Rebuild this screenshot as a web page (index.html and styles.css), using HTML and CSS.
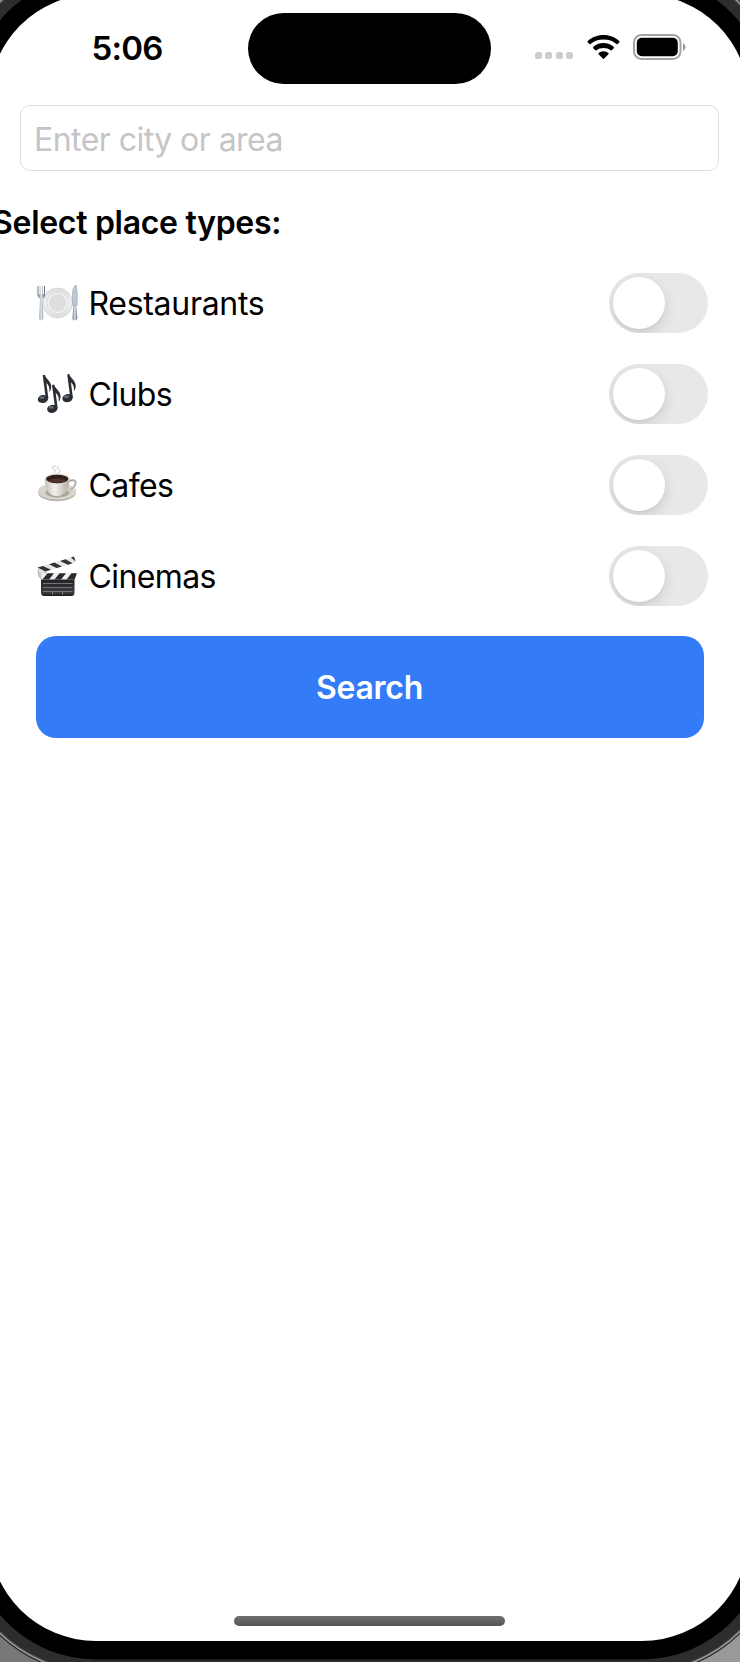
FILE: index.html
```html
<!DOCTYPE html>
<html lang="en">
<head>
<meta charset="utf-8">
<title>Place search</title>
<link rel="stylesheet" href="styles.css">
</head>
<body>
<main class="screen">
  <header class="status">
    <span class="time">5:06</span>
    <div class="island"></div>
    <div class="indicators">
      <span class="dots"><i></i><i></i><i></i><i></i></span>
      <svg class="wifi" width="33" height="25" viewBox="0 0 33 25">
        <path d="M16.5 0C23 0 28.5 2.400 32.400 6.200Q32.900 6.800 32.400 7.300L30.600 9.100Q30 9.600 29.400 9.100C26 5.900 21.500 4.600 16.500 4.600S7 5.900 3.600 9.100Q3 9.600 2.400 9.100L.6 7.300Q.1 6.800.6 6.200C4.500 2.400 10 0 16.500 0Z"/>
        <path d="M16.500 8.100C20.600 8.100 24.100 9.500 26.800 12.100Q27.300 12.700 26.800 13.200L24.700 15.200Q24.100 15.700 23.500 15.200C21.600 13.600 19.200 12.900 16.500 12.900S11.400 13.600 9.500 15.200Q8.900 15.700 8.300 15.200L6.200 13.200Q5.700 12.700 6.200 12.100C8.900 9.500 12.400 8.100 16.500 8.100Z"/>
        <path d="M16.500 16.200C18.500 16.200 20.200 17 21.400 18.100Q21.900 18.700 21.400 19.200L17.200 23.600Q16.500 24.300 15.800 23.600L11.600 19.200Q11.100 18.700 11.600 18.100C12.800 17 14.500 16.200 16.500 16.200Z"/>
      </svg>
      <svg class="battery" width="54" height="26" viewBox="0 0 54 26">
        <rect x="1" y="1" width="46.500" height="24" rx="7.500" fill="none" stroke="#a3a3a3" stroke-width="2"/>
        <rect x="3.800" y="3.800" width="41" height="18.400" rx="5"/>
        <path d="M50 9.300C53.300 10.600 53.300 15.600 50 16.900Z" fill="#999"/>
      </svg>
    </div>
  </header>

  <input class="city" type="text" placeholder="Enter city or area">
  <h1 class="heading">Select place types:</h1>

  <ul class="types">
    <li class="type">
      <svg class="emoji" width="44" height="44" viewBox="0 0 44 44">
        <defs>
          <linearGradient id="steel" x2="1" y2="0"><stop stop-color="#71757d"/><stop offset=".5" stop-color="#dce5ef"/><stop offset="1" stop-color="#62666e"/></linearGradient>
          <linearGradient id="plate" x2="0" y2="1"><stop stop-color="#dededc"/><stop offset=".5" stop-color="#efefee"/><stop offset="1" stop-color="#dcdcda"/></linearGradient>
        </defs>
        <circle cx="20.500" cy="21" r="15" fill="url(#plate)" stroke="#d2d2d0" stroke-width=".7"/>
        <circle cx="20.500" cy="21" r="10.500" fill="#f4f5f7" stroke="#d0d4dc" stroke-width=".7"/>
        <circle cx="20.500" cy="21" r="8.900" fill="#dededc"/>
        <path d="M.5 4V12Q.5 16 3 16.500L2.200 35.500Q2.100 38.500 4.200 38.500T6.300 35.500L5.500 16.500Q8 16 8 12V4H7V12H5.900V4H4.900V12H3.700V4H2.700V12H1.600V4Z" fill="url(#steel)"/>
        <path d="M36.400 23H39L40.300 35.500Q40.500 38.500 37.800 38.500T35.500 35.500Z" fill="url(#steel)"/>
        <path d="M35.500 22V12Q35.500 5 39.200 3Q40.900 12 40 23.500H36.500Q35.500 23.500 35.500 22Z" fill="#b9cadb" stroke="#8b949f" stroke-width=".5"/>
      </svg>
      <span class="label restaurants">Restaurants</span><span class="toggle"><i></i></span>
    </li>
    <li class="type">
      <svg class="emoji" width="44" height="44" viewBox="0 0 44 44">
        <g fill="#292e35">
          <g id="note">
            <ellipse cx="6" cy="26" rx="5.200" ry="4" transform="rotate(-13 6 26)"/>
            <path d="M5.700 2.200L7.900 1.800C8.800 6.500 14.300 8 14.300 14Q14.200 17 12.300 19C13.300 13 10.200 11 9.400 10L11.400 25.500 8.900 26.200Z"/>
            <ellipse cx="5" cy="24.600" rx="2.600" ry="1.200" fill="#68717c"/>
          </g>
          <use href="#note" x="9.300" y="9.800"/>
          <use href="#note" x="24.500" y="-.8"/>
        </g>
      </svg>
      <span class="label">Clubs</span><span class="toggle"><i></i></span>
    </li>
    <li class="type">
      <svg class="emoji" width="44" height="44" viewBox="0 0 44 44">
        <defs>
          <linearGradient id="cup" x2="1" y2="0"><stop stop-color="#c3c0b8"/><stop offset=".4" stop-color="#f3f1eb"/><stop offset="1" stop-color="#b1aea5"/></linearGradient>
        </defs>
        <ellipse cx="20" cy="28.500" rx="19" ry="8.800" fill="#b7b4ac"/>
        <ellipse cx="20" cy="27.300" rx="19" ry="8.300" fill="#d8d5cd"/>
        <ellipse cx="20.500" cy="28.500" rx="12" ry="5" fill="#aaa69d"/>
        <path d="M31 17.500Q39 14.500 38 20Q36.500 26 29 26" fill="none" stroke="#d0cec7" stroke-width="2.400"/>
        <path d="M33 16.500Q40 14.500 39 19.500Q38 24 33 26" fill="none" stroke="#85827b" stroke-width=".7"/>
        <path d="M7.800 14.500C7.800 24 11 32 20 32S32.500 24 32.500 14.500Z" fill="url(#cup)"/>
        <ellipse cx="20.200" cy="14.500" rx="12.400" ry="5" fill="#dedbd3"/>
        <ellipse cx="20.200" cy="15" rx="11.200" ry="4.200" fill="#30201b"/>
        <ellipse cx="20.200" cy="16.600" rx="8.500" ry="2" fill="#503329"/>
        <path d="M17 8.500Q20 7 16.500 5T19 1.500M21 9.500Q25 6 21.500 5T22 2" fill="none" stroke="#ddd" stroke-width="1.400"/>
      </svg>
      <span class="label">Cafes</span><span class="toggle"><i></i></span>
    </li>
    <li class="type">
      <svg class="emoji" width="44" height="44" viewBox="0 0 44 44">
        <defs>
          <linearGradient id="slate" x2="0" y2="1"><stop stop-color="#202124"/><stop offset=".8" stop-color="#3c3d40"/><stop offset="1" stop-color="#17181a"/></linearGradient>
        </defs>
        <path d="M1 14L9 17 11 24 4 24 1.500 21Z" fill="#c9cccd" stroke="#8b8e90" stroke-width=".5"/>
        <circle cx="6.500" cy="20" r="3.400" fill="#e4e6e7" stroke="#a8abad" stroke-width=".5"/>
        <path d="M.5 12.500L37 1.500 38.500 7.500 3 18Z" fill="#e5e6e6"/>
        <path d="M.5 12.500L6 11 14 14.800 8.500 16.400ZM12 9.200L17.500 7.500 25 11.500 19.500 13.100ZM23 6L28.500 4.200 35.500 8.300 31 9.700ZM34 2.400L37 1.500 38.500 6.500Z" fill="#333437"/>
        <path d="M4 24H37.500V37.500Q37.500 41 34 41H7.500Q4 41 4 37.500Z" fill="url(#slate)"/>
        <path d="M4.500 18.300H40L37.500 24.500H4Z" fill="#eeeeed"/>
        <path d="M10.500 18.300H17L12 24.500H5.500ZM22.500 18.300H29L24 24.500H17.500ZM34.500 18.300H40L37.500 24.500H29.500Z" fill="#292a2d"/>
        <path d="M6 28.500H35.500M6 32.500H35.500M6 36.500H35.500M15.500 37V40M25.500 37V40" stroke="#85878a" stroke-width=".8"/>
      </svg>
      <span class="label">Cinemas</span><span class="toggle"><i></i></span>
    </li>
  </ul>

  <button class="search" type="button">Search</button>
  <div class="home"></div>
</main>
</body>
</html>
```
FILE: styles.css
```css
* { box-sizing: border-box; }

html {
  background: linear-gradient(90deg, #777, #999);
}

body {
  width: 740px;
  height: 1662px;
  margin: 0;
  overflow: hidden;
  display: flex;
  font-family: Inter, "Liberation Sans", sans-serif;
  color: #000;
}

/* The device is wider than the window, so its side edges are clipped. */
.screen {
  flex: none;
  width: 760px;
  height: 1647px;
  margin: -6.5px 0 0 -11px;
  padding: 19px 31px 15px;
  display: flex;
  flex-direction: column;
  background: #fff;
  border-radius: 107px;
  box-shadow:
    0 0 0 18.5px #000,
    0 0 0 29.5px #2d2d2d,
    0 0 0 30.5px #555,
    0 0 0 32px #999,
    0 0 0 33px #222;
}

.status {
  height: 71.500px;
  display: grid;
  grid-template-columns: 228px 243px 1fr;
  flex: none;
}

.time {
  padding-left: 71.500px;
  font-size: 33px;
  font-weight: 600;
  line-height: 71px;
  letter-spacing: -0.8px;
}

.island {
  border-radius: 36px;
  background: #000;
}

.indicators {
  display: flex;
  align-items: flex-start;
  padding: 22px 0 0 44px;
}

.dots {
  display: flex;
  gap: 3.300px;
  margin: 17.500px 14px 0 0;
}

.dots i {
  width: 7px;
  height: 7px;
  border-radius: 2.500px;
  background: #ccc;
}

.wifi { margin-right: 13.500px; }

.battery { margin-top: -0.5px; }

.city {
  flex: none;
  width: 699px;
  height: 66px;
  margin-top: 21px;
  padding: 2px 13px 0;
  border: 1px solid #dedede;
  border-radius: 10px;
  background: #fff;
  font: 400 32px/62px Inter, sans-serif;
  letter-spacing: -0.55px;
}

.city::placeholder {
  color: #c5c5c7;
  opacity: 1;
}

.heading {
  margin: 32px 0 0 -28px;
  font-size: 32px;
  font-weight: 600;
  line-height: 40px;
  letter-spacing: -0.3px;
}

.types {
  list-style: none;
  margin: 29.500px 10.500px 0 16.500px;
  padding: 0;
  display: grid;
  gap: 30px;
}

.type {
  display: flex;
  align-items: center;
  height: 61px;
}

.emoji {
  flex: none;
  margin-top: 2px;
}

.label {
  flex: 1;
  padding: 1px 0 0 8px;
  font-size: 32px;
  line-height: 60px;
  letter-spacing: -0.6px;
}

.restaurants { letter-spacing: -0.3px; }

.toggle {
  width: 99px;
  height: 60px;
  padding: 4px;
  border-radius: 30px;
  background: #e8e8ea;
  overflow: hidden;
}

.toggle i {
  display: block;
  width: 52px;
  height: 52px;
  border-radius: 50%;
  background: #fff;
  box-shadow: 0 5px 14px rgba(0, 0, 0, 0.12), 0 2px 2px rgba(0, 0, 0, 0.03);
}

.search {
  flex: none;
  width: 668px;
  height: 102px;
  margin: 29.500px 0 0 15.500px;
  padding: 1px 0 0;
  border: 0;
  border-radius: 20px;
  background: #337bf7;
  color: #fff;
  font: 600 32px/101px Inter, sans-serif;
  letter-spacing: -0.3px;
}

.home {
  width: 271px;
  height: 10px;
  margin: auto auto 0;
  border-radius: 5px;
  background: linear-gradient(#707070, #555);
}
```
